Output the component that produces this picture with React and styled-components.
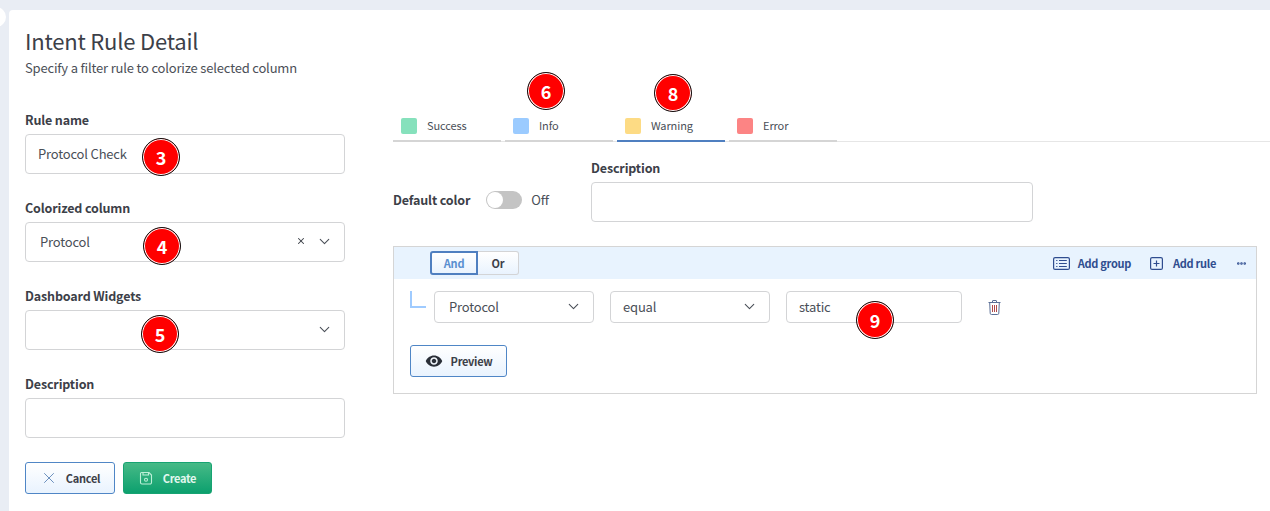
import React from "react";
import styled, { createGlobalStyle } from "styled-components";
import { ChevronDown, X, Ellipsis } from "lucide-react";
import { MdVisibility } from "react-icons/md";

const FONT = `"Noto Sans CJK SC", "Noto Sans", sans-serif`;

const GlobalStyle = createGlobalStyle`
  html, body {
    margin: 0;
    height: 511px;
    overflow: hidden;
    background: #e9edf4;
    font-family: ${FONT};
    color: #3b3f46;
  }
  * { box-sizing: border-box; }
`;

const Page = styled.div`
  position: relative;
  height: 511px;
  padding: 10px 0 0 9px;
`;
const SideHandle = styled.div`
  position: absolute;
  left: -14px;
  top: 7px;
  width: 20px;
  height: 20px;
  border-radius: 50%;
  background: #fff;
`;
const Card = styled.main`
  background: #fff;
  height: 501px;
  border-radius: 4px 0 0 0;
  padding: 15px 0 0 16px;
`;
const Title = styled.h1`
  margin: 0;
  font-size: 22px;
  line-height: 30px;
  font-weight: 400;
  letter-spacing: -0.2px;
  color: #3c4048;
`;
const Subtitle = styled.p`
  margin: 3px 0 0;
  font-size: 13px;
  line-height: 20px;
  letter-spacing: -0.18px;
  color: #4b4f57;
`;
const Columns = styled.div`
  display: flex;
  align-items: flex-start;
`;
const LeftColumn = styled.section`
  width: 320px;
  margin-top: 32px;
  flex: none;
`;
const RightColumn = styled.section`
  width: 877px;
  margin: 32px 0 0 48px;
  flex: none;
`;
const Field = styled.div`
  margin-bottom: 24px;
`;
const Label = styled.label`
  display: block;
  font-size: 12.5px;
  line-height: 20px;
  font-weight: 600;
  letter-spacing: -0.15px;
  color: #3c4048;
  margin-bottom: 4px;
`;
const Box = styled.div`
  display: flex;
  align-items: center;
  width: ${(p) => p.$width || "100%"};
  height: ${(p) => p.$height || 40}px;
  padding: 0 ${(p) => p.$right ?? 11}px 2px ${(p) => p.$left ?? 12}px;
  border: 1px solid #d3d4d6;
  border-radius: 4px;
  background: #fff;
  font-size: 13px;
  letter-spacing: -0.18px;
  color: #4a4f58;
  flex: none;
`;
const BoxText = styled.span`
  flex: 1;
`;
const ClearMark = styled.span`
  display: flex;
  margin-right: 10px;
  color: #3c4048;
`;
const Actions = styled.div`
  display: flex;
  gap: 8px;
`;
const Button = styled.button`
  display: flex;
  align-items: center;
  justify-content: center;
  gap: ${(p) => p.$gap || 10}px;
  width: ${(p) => p.$width}px;
  height: 32px;
  padding: 0;
  font-family: ${FONT};
  font-size: 11px;
  font-weight: 600;
  letter-spacing: -0.3px;
  border-radius: 3px;
  border: 1px solid ${(p) => (p.$primary ? "#17a372" : "#4f86c6")};
  color: ${(p) => (p.$primary ? "#e2f7ee" : "#3c4048")};
  background: ${(p) =>
    p.$primary
      ? "linear-gradient(#47ba87, #0ca06e)"
      : "linear-gradient(#ffffff, #e9f3fe)"};
`;
const Tabs = styled.nav`
  display: flex;
  gap: 4px;
  height: 32px;
  border-bottom: 1px solid #e6e6e6;
`;
const Tab = styled.div`
  display: flex;
  align-items: center;
  gap: 10px;
  width: 108px;
  height: 32px;
  padding: 2px 0 0 8px;
  font-size: 11px;
  letter-spacing: -0.1px;
  color: #4a4f58;
  border-bottom: 2px solid ${(p) => (p.$active ? "#4f7fc0" : "#d5d5d5")};
`;
const TabName = styled.span`
  padding-bottom: 2px;
`;
const Swatch = styled.span`
  width: 16px;
  height: 16px;
  border-radius: 2px;
  background: ${(p) => p.$color};
`;
const DefaultRow = styled.div`
  display: flex;
  align-items: flex-end;
  margin-top: 16px;
`;
const ToggleGroup = styled.div`
  display: flex;
  align-items: center;
  height: 40px;
  width: 198px;
  margin-bottom: 2px;
  flex: none;
`;
const ToggleLabel = styled.span`
  font-size: 12.5px;
  font-weight: 600;
  letter-spacing: -0.15px;
  color: #3c4048;
  margin-right: 16px;
  padding-bottom: 2px;
`;
const Toggle = styled.span`
  display: block;
  width: 36px;
  height: 18px;
  padding: 1px;
  border-radius: 9px;
  background: #c4c4c4;
  margin-right: 9px;
`;
const Knob = styled.span`
  display: block;
  width: 16px;
  height: 16px;
  border-radius: 50%;
  background: #fff;
`;
const ToggleState = styled.span`
  font-size: 13px;
  letter-spacing: -0.18px;
  color: #4a4f58;
  padding-bottom: 2px;
`;
const QueryPanel = styled.div`
  margin-top: 24px;
  width: 864px;
  height: 148px;
  border: 1px solid #d5d5d5;
`;
const QueryHeader = styled.div`
  display: flex;
  align-items: center;
  height: 32px;
  padding: 0 9px 0 36px;
  background: #e8f3fe;
`;
const Combinator = styled.div`
  display: flex;
  flex: 1;
`;
const ComboButton = styled.button`
  width: ${(p) => p.$width}px;
  height: 24px;
  padding: 0;
  font-family: ${FONT};
  font-size: 11px;
  font-weight: 600;
  letter-spacing: -0.2px;
  color: ${(p) => (p.$active ? "#5a8fd0" : "#3c4048")};
  background: linear-gradient(#ffffff, #e9f3fe);
  border: ${(p) => (p.$active ? "2px solid #4f7fc0" : "1px solid #d3d4d6")};
  border-left-width: ${(p) => (p.$active ? "2px" : "0")};
  border-radius: ${(p) => (p.$active ? "3px 0 0 3px" : "0 3px 3px 0")};
`;
const HeaderAction = styled.span`
  display: flex;
  align-items: center;
  gap: ${(p) => p.$gap}px;
  margin-right: ${(p) => p.$right}px;
  font-size: 11px;
  font-weight: 600;
  letter-spacing: -0.3px;
  color: #2f4d8f;
`;
const RuleRow = styled.div`
  display: flex;
  align-items: center;
  gap: 16px;
  margin-top: 12px;
  padding-left: 16px;
`;
const Connector = styled.span`
  width: 16px;
  height: 17px;
  margin: 0 -8px 15px 0;
  border-left: 2px solid #9fcbff;
  border-bottom: 2px solid #9fcbff;
  flex: none;
`;
const TrashButton = styled.span`
  display: flex;
  margin-left: 10px;
  color: #5b6f96;
`;
const PreviewRow = styled.div`
  margin: 22px 0 0 16px;
`;
const Badge = styled.span`
  position: absolute;
  left: ${(p) => p.$x}px;
  top: ${(p) => p.$y}px;
  width: 38px;
  height: 38px;
  display: flex;
  align-items: center;
  justify-content: center;
  border-radius: 50%;
  background: #f00;
  border: 1px solid #111;
  box-shadow: inset 0 0 0 1px #fff;
  color: #fff;
  font-size: 18px;
  font-weight: 700;
`;

const SaveIcon = () => (
  <svg width="14" height="14" viewBox="0 0 14 14" fill="none" stroke="#bdf0d8" strokeWidth="1.1">
    <path d="M1.5 2.5a1 1 0 0 1 1-1h7.5l2.5 2.5v7.5a1.5 1.5 0 0 1-1.5 1.5h-8a1.5 1.5 0 0 1-1.5-1.5z" />
    <path d="M4 1.5v2.5h5.5V1.5" />
    <circle cx="7" cy="8.7" r="1.5" />
  </svg>
);

const GroupIcon = () => (
  <svg width="17" height="13" viewBox="0 0 17 13" fill="none" stroke="#2f4d8f" strokeWidth="1.2">
    <rect x="0.6" y="0.6" width="15.8" height="11.8" rx="1.5" />
    <path d="M3.2 3.5h1.2M3.2 6.5h1.2M3.2 9.5h1.2M6 3.5h7.8M6 6.5h7.8M6 9.5h7.8" />
  </svg>
);

const PlusBoxIcon = () => (
  <svg width="13" height="13" viewBox="0 0 13 13" fill="none" stroke="#2f4d8f" strokeWidth="1.2">
    <rect x="0.6" y="0.6" width="11.8" height="11.8" rx="1.5" />
    <path d="M6.5 3.5v6M3.5 6.5h6" />
  </svg>
);

const TrashIcon = () => (
  <svg width="13" height="15" viewBox="0 0 13 15" fill="none" stroke="currentColor" strokeWidth="1">
    <path d="M0.5 2.5h12M4.5 2.5V1a.5.5 0 0 1 .5-.5h3a.5.5 0 0 1 .5.5v1.5" />
    <path d="M1.7 2.5l.5 10.7a1.3 1.3 0 0 0 1.3 1.3h6a1.3 1.3 0 0 0 1.3-1.3l.5-10.7" />
    <path d="M4.5 5v7" stroke="#b04a4a" />
    <path d="M6.5 5v7" stroke="#b04a4a" />
    <path d="M8.5 5v7" stroke="#b04a4a" />
  </svg>
);

const tabs = [
  { name: "Success", color: "#86e1bc" },
  { name: "Info", color: "#9bcbff" },
  { name: "Warning", color: "#fddb84", active: true },
  { name: "Error", color: "#fc8484" },
];

const badges = [
  { n: 3, x: 142, y: 138 },
  { n: 4, x: 143, y: 227 },
  { n: 5, x: 141, y: 315 },
  { n: 6, x: 527, y: 72 },
  { n: 8, x: 654, y: 74 },
  { n: 9, x: 856, y: 301 },
];

const App = () => {
  return (
    <Page>
      <GlobalStyle />
      <SideHandle />
      <Card>
        <Title>Intent Rule Detail</Title>
        <Subtitle>Specify a filter rule to colorize selected column</Subtitle>
        <Columns>
          <LeftColumn>
            <Field>
              <Label>Rule name</Label>
              <Box>Protocol Check</Box>
            </Field>
            <Field>
              <Label>Colorized column</Label>
              <Box $left={14}>
                <BoxText>Protocol</BoxText>
                <ClearMark>
                  <X size={10} strokeWidth={2.5} />
                </ClearMark>
                <ChevronDown size={17} strokeWidth={1.5} />
              </Box>
            </Field>
            <Field>
              <Label>Dashboard Widgets</Label>
              <Box>
                <BoxText />
                <ChevronDown size={17} strokeWidth={1.5} />
              </Box>
            </Field>
            <Field>
              <Label>Description</Label>
              <Box />
            </Field>
            <Actions>
              <Button $width={90} $gap={8}>
                <X size={18} strokeWidth={1} color="#3f6ea8" />
                Cancel
              </Button>
              <Button $primary $width={89}>
                <SaveIcon />
                Create
              </Button>
            </Actions>
          </LeftColumn>
          <RightColumn>
            <Tabs>
              {tabs.map((t) => (
                <Tab key={t.name} $active={t.active}>
                  <Swatch $color={t.color} />
                  <TabName>{t.name}</TabName>
                </Tab>
              ))}
            </Tabs>
            <DefaultRow>
              <ToggleGroup>
                <ToggleLabel>Default color</ToggleLabel>
                <Toggle>
                  <Knob />
                </Toggle>
                <ToggleState>Off</ToggleState>
              </ToggleGroup>
              <div>
                <Label>Description</Label>
                <Box $width="442px" />
              </div>
            </DefaultRow>
            <QueryPanel>
              <QueryHeader>
                <Combinator>
                  <ComboButton $active $width={48}>
                    And
                  </ComboButton>
                  <ComboButton $width={41}>Or</ComboButton>
                </Combinator>
                <HeaderAction $gap={8} $right={19}>
                  <GroupIcon />
                  Add group
                </HeaderAction>
                <HeaderAction $gap={10} $right={20}>
                  <PlusBoxIcon />
                  Add rule
                </HeaderAction>
                <Ellipsis size={11} strokeWidth={3.5} color="#2f4d8f" />
              </QueryHeader>
              <RuleRow>
                <Connector />
                <Box $width="160px" $height={32} $left={14}>
                  <BoxText>Protocol</BoxText>
                  <ChevronDown size={17} strokeWidth={1.5} />
                </Box>
                <Box $width="160px" $height={32}>
                  <BoxText>equal</BoxText>
                  <ChevronDown size={17} strokeWidth={1.5} />
                </Box>
                <Box $width="176px" $height={32}>static</Box>
                <TrashButton>
                  <TrashIcon />
                </TrashButton>
              </RuleRow>
              <PreviewRow>
                <Button $width={97} $gap={8}>
                  <MdVisibility size={18} color="#2a2f38" />
                  Preview
                </Button>
              </PreviewRow>
            </QueryPanel>
          </RightColumn>
        </Columns>
      </Card>
      {badges.map((b) => (
        <Badge key={b.n} $x={b.x} $y={b.y}>
          {b.n}
        </Badge>
      ))}
    </Page>
  );
};

export default App;
